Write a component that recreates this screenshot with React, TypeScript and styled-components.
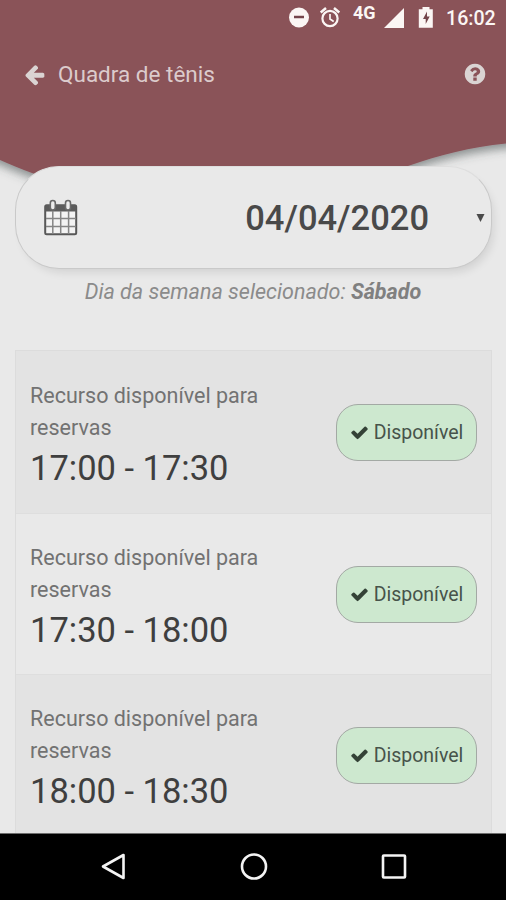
import React from 'react';
import styled, { createGlobalStyle } from 'styled-components';

const GlobalStyle = createGlobalStyle`
  * { box-sizing: border-box; }
  body { margin: 0; background: #e9e9e9; font-family: Roboto, "Noto Sans", sans-serif; }
`;

const Screen = styled.div`
  width: 506px;
  height: 900px;
  display: flex;
  flex-direction: column;
  overflow: hidden;
  background: #e9e9e9;
`;

const Header = styled.header`
  position: relative;
  isolation: isolate;
  height: 166px;
  flex: none;
`;

const Wave = styled.svg`
  position: absolute;
  inset: 0;
  z-index: -1;
  overflow: visible;
`;

const StatusBar = styled.div`
  height: 36px;
  padding-right: 11px;
  display: flex;
  justify-content: flex-end;
  color: #fbf6f4;

  svg { display: block; }
`;

const Network = styled.span`
  margin: 3px 6px 0 12px;
  width: 25px;
  font-size: 18px;
  font-weight: 700;
  line-height: 20px;
  white-space: nowrap;
`;

const Clock = styled.span`
  width: 49px;
  margin-left: 12px;
  font-size: 19.6px;
  font-weight: 500;
  line-height: 37px;
  white-space: nowrap;
`;

const TitleBar = styled.div`
  height: 76px;
  padding: 0 19px 0 23px;
  display: flex;
  align-items: center;
  color: #dccbcc;

  svg { display: block; fill: #dad4d3; }
`;

const Title = styled.h1`
  flex: 1;
  margin: 0 0 0 12px;
  font-size: 22.5px;
  font-weight: 400;
`;

const DatePicker = styled.div`
  position: relative;
  flex: none;
  height: 103px;
  margin: 0 14px 0 15px;
  padding: 0 6px 0 28px;
  display: flex;
  align-items: center;
  border: 1px solid #c9c9c9;
  border-top-color: #dedede;
  border-radius: 44px;
  background: #e9e9e9;
  box-shadow: 4px 6px 10px -3px rgba(0, 0, 0, 0.11);
`;

const DateValue = styled.span`
  margin: 0 47px 0 auto;
  font-size: 34.5px;
  font-weight: 500;
  color: #494949;
`;

const Weekday = styled.p`
  flex: none;
  margin: 6px 0 0;
  height: 75px;
  line-height: 34px;
  text-align: center;
  font-size: 21.5px;
  font-style: italic;
  color: #8b8b8b;

  strong { font-weight: 700; color: #808080; }
`;

const SlotList = styled.div`
  flex: 1;
  min-height: 0;
  overflow: hidden;
  margin: 0 14px 0 15px;
  padding-top: 1px;
  border: solid #dcdcdc;
  border-width: 1px 1px 0;
  background: #e3e3e3;
`;

const Slot = styled.div<{ $shaded: boolean }>`
  height: 161.6px;
  padding: 1px 14px 0;
  display: flex;
  align-items: center;
  justify-content: space-between;
  background: ${(p) => (p.$shaded ? '#e3e3e3' : '#e9e9e9')};
  border-bottom: 1px solid #dedede;
`;

const SlotInfo = styled.div`
  width: 250px;
  padding-top: 8px;
`;

const Description = styled.div`
  font-size: 21.5px;
  line-height: 32px;
  color: #727272;
`;

const Time = styled.div`
  font-size: 34.5px;
  line-height: 49px;
  color: #3f3f3f;
  white-space: nowrap;
`;

const Available = styled.button`
  width: 141px;
  height: 57px;
  padding: 0;
  display: flex;
  align-items: center;
  justify-content: center;
  gap: 5px;
  border: 1.5px solid #a3a9a4;
  border-radius: 22px;
  background: #cde8cf;
  color: #47534a;
  font: 400 19.5px Roboto, "Noto Sans", sans-serif;

  svg { fill: #344237; }
`;

const NavBar = styled.nav`
  flex: none;
  height: 67px;
  padding: 0 0 0 98px;
  display: flex;
  align-items: center;
  gap: 110.5px;
  background: #000;
  border-top: 1px solid #6d6d6d;

  svg { display: block; fill: none; stroke: #f4f4f4; stroke-width: 2.6; }
`;

const slots = ['17:00 - 17:30', '17:30 - 18:00', '18:00 - 18:30'];

const CheckIcon = () => (
  <svg width="19" height="19" viewBox="0 0 1792 1792">
    <path d="M1671 566q0 40-28 68l-724 724-136 136q-28 28-68 28t-68-28l-136-136-362-362q-28-28-28-68t28-68l136-136q28-28 68-28t68 28l294 295 656-657q28-28 68-28t68 28l136 136q28 28 28 68z" />
  </svg>
);

const CalendarIcon = () => (
  <svg width="34" height="37" viewBox="0 0 34 37">
    <rect x="1.2" y="6.2" width="31" height="29" rx="1.5" fill="#f3f3f3" stroke="#585858" strokeWidth="2" />
    <path d="M1.5 6h30.5v6.500H1.5z" fill="#5c5c5c" />
    <path d="M8.800 12v23M16.700 12v23M24.600 12v23M2 19.500h30M2 27.500h30" stroke="#858585" strokeWidth="1.500" />
    <rect x="6.300" y="1.500" width="5" height="9.500" rx="2.500" fill="#ededed" stroke="#6a6a6a" strokeWidth="1.600" />
    <rect x="21.500" y="1.500" width="5" height="9.500" rx="2.500" fill="#ededed" stroke="#6a6a6a" strokeWidth="1.600" />
  </svg>
);

export default function App() {
  return (
    <>
      <GlobalStyle />
      <Screen>
        <Header>
          <Wave width="506" height="190" viewBox="0 0 506 190">
            <defs>
              <filter id="waveShadow" x="-10%" y="-10%" width="120%" height="130%">
                <feDropShadow dx="0" dy="5" stdDeviation="5" floodColor="#3c4a46" floodOpacity="0.55" />
              </filter>
            </defs>
            <path
              d="M-30-30H536V141Q520 142 506 143.500C470 147 440 155 408 166Q220 225 32 173C20 169 10 164 0 160L-30 149Z"
              fill="#8a5259"
              filter="url(#waveShadow)"
            />
          </Wave>
          <StatusBar>
            <svg width="22" height="36" viewBox="0 0 22 36">
              <circle cx="10" cy="17.500" r="10" fill="currentColor" />
              <path d="M5 17h10" stroke="#74454b" strokeWidth="2.500" />
            </svg>
            <svg width="30" height="36" viewBox="0 0 30 36" fill="none" stroke="currentColor">
              <circle cx="19" cy="18.500" r="7.600" strokeWidth="2.200" />
              <path d="M19 14v5l3.700 2.500" strokeWidth="1.700" />
              <path d="M9.700 12.500l5.300-4.500M28.300 12.500l-5.300-4.500" strokeWidth="2.500" />
            </svg>
            <Network>4G</Network>
            <svg width="21" height="36" viewBox="0 0 21 36">
              <path d="M0 28L20 8V28Z" fill="currentColor" />
            </svg>
            <svg width="29" height="36" viewBox="0 0 29 36">
              <path d="M17.500 7h7v2.300h3.300v18.400H13.800V9.300h3.700z" fill="currentColor" />
              <path d="M22 11.500l-4 7.500h2.700v5l4-7.500h-2.700z" fill="#74454b" />
            </svg>
            <Clock>16:02</Clock>
          </StatusBar>
          <TitleBar>
            <svg width="23" height="23" viewBox="0 0 1792 1792">
              <path d="M1664 896v128q0 53-32.500 90.500t-84.500 37.500h-704l293 294q38 36 38 90t-38 90l-75 76q-37 37-90 37-52 0-91-37l-651-652q-37-37-37-90 0-52 37-91l651-650q38-38 91-38 52 0 90 38l75 74q38 38 38 91t-38 91l-293 293h704q52 0 84.500 37.500t32.500 90.500z" />
            </svg>
            <Title>Quadra de tênis</Title>
            <svg width="24" height="24" viewBox="0 0 1792 1792">
              <path d="M1024 1376v-192q0-14-9-23t-23-9h-192q-14 0-23 9t-9 23v192q0 14 9 23t23 9h192q14 0 23-9t9-23zm256-672q0-88-55.500-163t-138.500-116-170-41q-243 0-371 213-15 24 8 42l132 100q7 6 19 6 16 0 25-12 53-68 86-92 34-24 86-24 48 0 85.500 26t37.500 59q0 38-20 61t-68 45q-63 28-115.500 86.500t-52.500 125.500v36q0 14 9 23t23 9h192q14 0 23-9t9-23q0-19 21.500-49.500t54.500-49.500q32-18 49-28.500t46-35 44.500-48 28-60.500 12.500-81zm384 192q0 209-103 385.500t-279.500 279.500-385.500 103-385.500-103-279.500-279.500-103-385.500 103-385.500 279.500-279.500 385.500-103 385.500 103 279.500 279.500 103 385.500z" />
            </svg>
          </TitleBar>
        </Header>
        <DatePicker>
          <CalendarIcon />
          <DateValue>04/04/2020</DateValue>
          <svg width="9" height="8" viewBox="0 0 9 8">
            <path d="M.5 0h8L4.500 8z" fill="#4a4a4a" />
          </svg>
        </DatePicker>
        <Weekday>
          Dia da semana selecionado: <strong>Sábado</strong>
        </Weekday>
        <SlotList>
          {slots.map((time, i) => (
            <Slot key={time} $shaded={i % 2 === 0}>
              <SlotInfo>
                <Description>Recurso disponível para reservas</Description>
                <Time>{time}</Time>
              </SlotInfo>
              <Available>
                <CheckIcon />
                Disponível
              </Available>
            </Slot>
          ))}
        </SlotList>
        <NavBar>
          <svg width="30" height="30" viewBox="0 0 30 30">
            <path d="M5 14.500L25.500 3V26Z" strokeLinejoin="round" />
          </svg>
          <svg width="30" height="30" viewBox="0 0 30 30">
            <circle cx="15" cy="14.500" r="12" />
          </svg>
          <svg width="30" height="30" viewBox="0 0 30 30">
            <rect x="4" y="3.500" width="22" height="22" rx=".8" />
          </svg>
        </NavBar>
      </Screen>
    </>
  );
}
